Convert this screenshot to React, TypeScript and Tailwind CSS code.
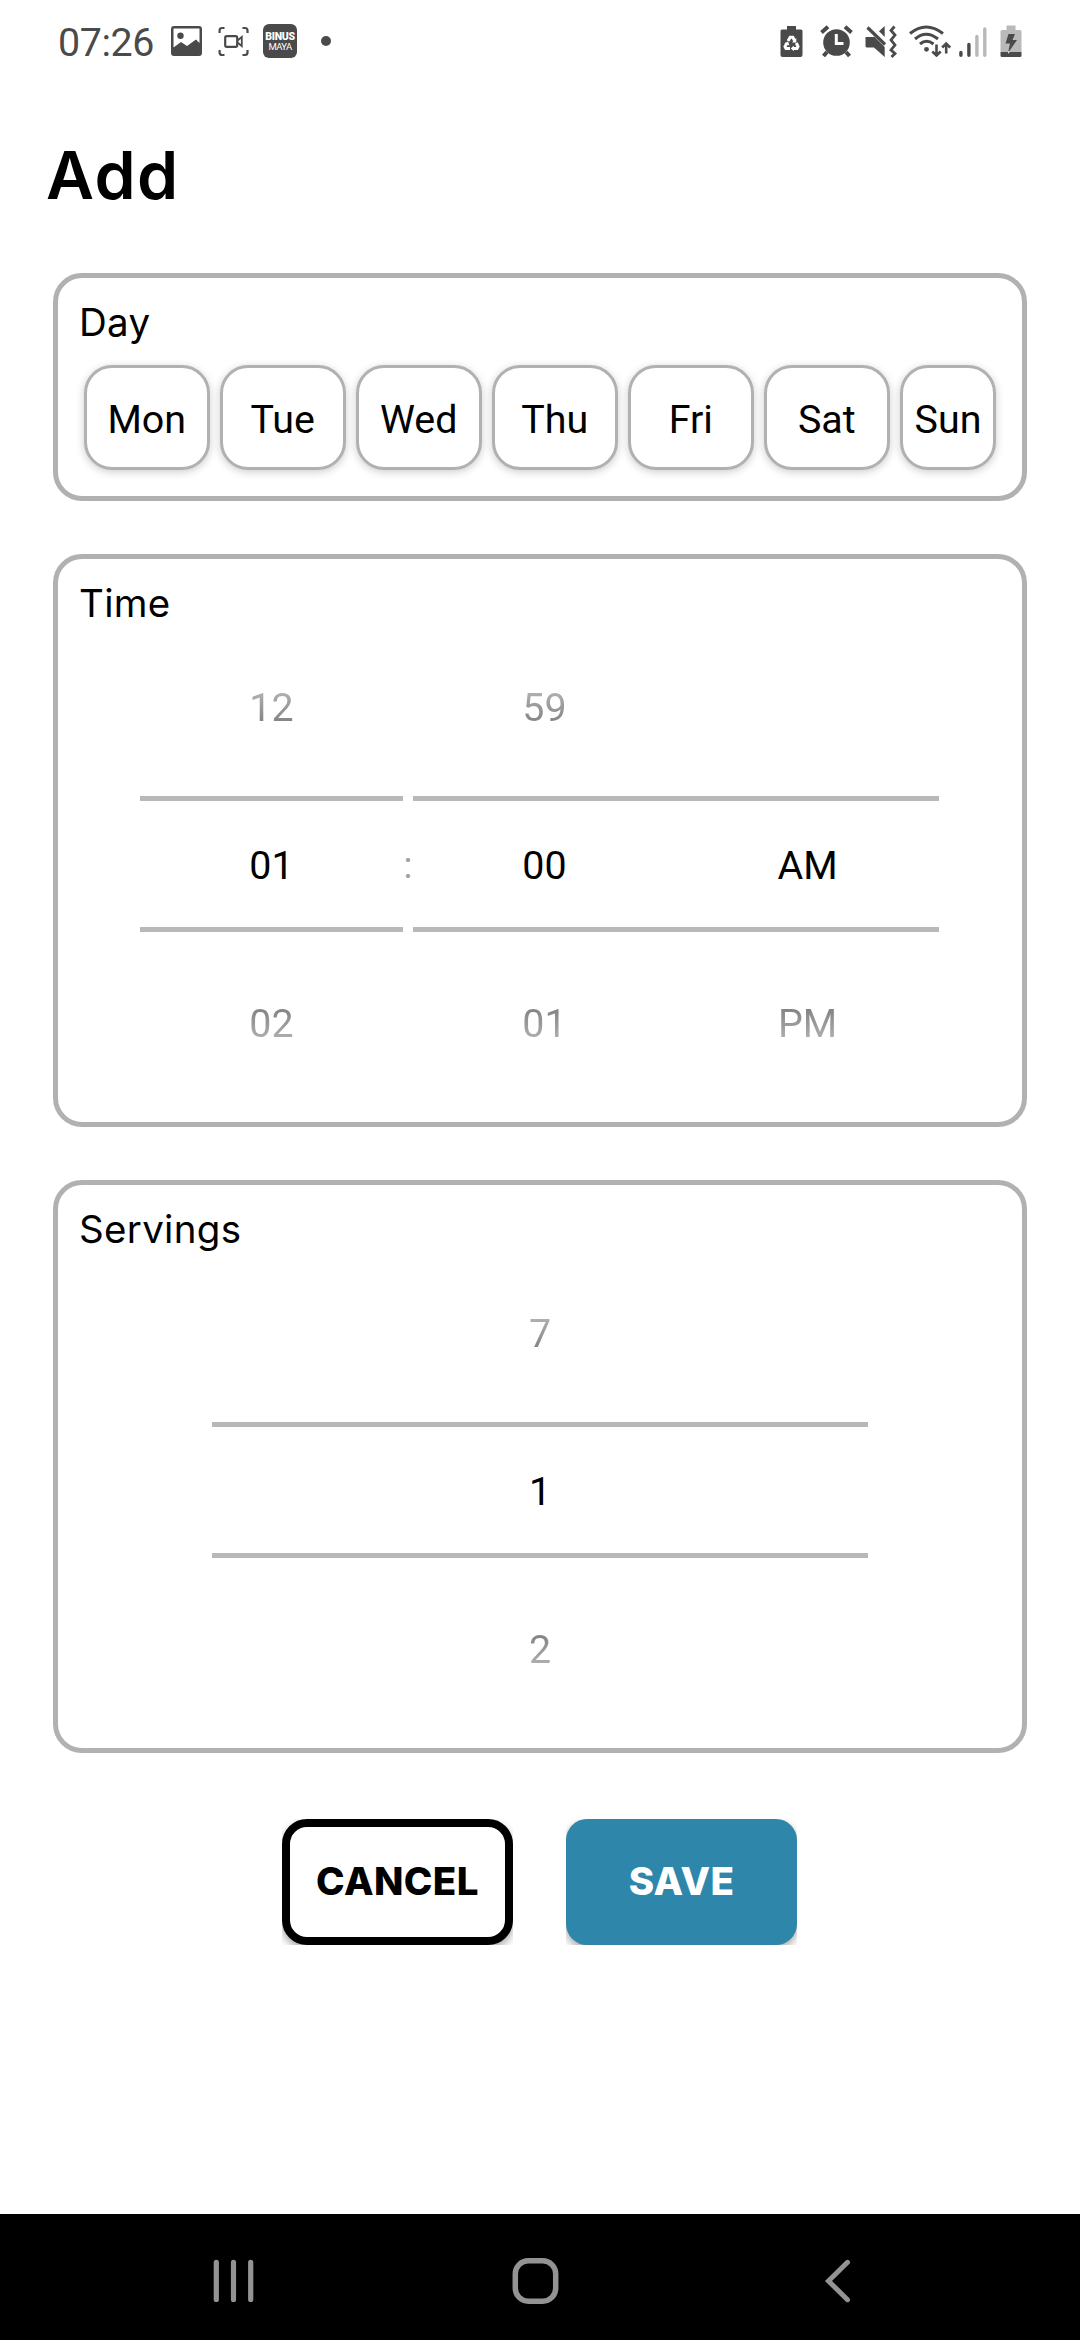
import type { ReactNode } from "react";

const days = ["Mon", "Tue", "Wed", "Thu", "Fri", "Sat"];

function StatusBar() {
  return (
    <header className="flex h-[84px] items-start text-[#4a4a4a]">
      <div className="mt-[20px] ml-[58px] w-[113px] text-[39.4px] leading-[46px] font-normal tracking-[-0.4px]">07:26</div>
      <svg className="mt-[26px] w-[31px] h-[31px]" viewBox="0 0 31 31" fill="currentColor">
        <path
          fillRule="evenodd"
          d="M3 0H28Q31 0 31 3V27Q31 30 28 30H3Q0 30 0 27V3Q0 0 3 0ZM2.500 2.500V21.500L10 16L16 20L25 13.500L28.500 17V2.500ZM9.500 6.500A3.200 3.200 0 1 1 9.500 12.900A3.200 3.200 0 1 1 9.500 6.500Z"
        />
      </svg>
      <svg className="mt-[26px] ml-[16px] w-[31px] h-[31px]" viewBox="0 0 31 31" fill="none" stroke="currentColor" strokeWidth="2.200">
        <path d="M1.600 7V4.500Q1.600 2 4.100 2H6.500M24.500 2H27Q29.500 2 29.500 4.500V7M29.500 24V26.500Q29.500 29 27 29H24.500M6.500 29H4.100Q1.600 29 1.600 26.500V24" />
        <rect x="7.200" y="10.200" width="12" height="10.600" rx="1.500" />
        <path d="M19.500 14.500L23.800 11V20L19.500 16.500" strokeWidth="1.800" />
      </svg>
      <div className="mt-[24px] ml-[14px] flex h-[34px] w-[34px] flex-col items-center rounded-[6px] bg-[#4a4a4a] pt-[8px] text-white">
        <span className="text-[10.500px] leading-[10px] font-black tracking-[-0.300px]">BINUS</span>
        <span className="text-[9.500px] leading-[9px] font-normal tracking-[-0.600px]">MAYA</span>
      </div>
      <div className="mt-[36px] ml-[24px] h-[10px] w-[10px] rounded-full bg-[#4a4a4a]" />

      <svg className="mt-[25px] ml-[449px] h-[33px] w-[23px]" viewBox="0 0 23 33" fill="currentColor">
        <path d="M7 1H16V4.500H21Q22.500 4.500 22.500 6V30Q22.500 32 20.500 32H2.500Q0.500 32 0.500 30V6Q0.500 4.500 2 4.500H7Z" />
        <g fill="none" stroke="#fff" strokeWidth="3">
          <path d="M8 16L10.200 12.300H12.800L14.500 15.500" />
          <path d="M16.300 18L18 21.500L17 23.500H13" />
          <path d="M10 23.500H6L5 21.500L7 18" />
        </g>
        <path d="M16.300 13V17.500H12ZM13.800 20.500V26.300L10.800 23.500ZM4.500 18.500L8 16.500L9.500 20.500Z" fill="#fff" />
      </svg>
      <svg className="mt-[25px] ml-[17px] h-[33px] w-[33px]" viewBox="0 0 33 33" fill="currentColor">
        <circle cx="16.500" cy="17.500" r="13.300" />
        <g stroke="currentColor" strokeWidth="4">
          <path d="M1.500 7.500L8 1.800M31.500 7.500L25 1.800" />
          <path d="M7 27L3.500 31M26 27L29.500 31" />
        </g>
        <path d="M16.300 9V18.500H23.500" fill="none" stroke="#fff" strokeWidth="3" />
      </svg>
      <svg className="mt-[25px] ml-[12px] h-[33px] w-[33px]" viewBox="0 0 33 33" fill="currentColor">
        <path d="M0.500 12H8.500L9 11.500L19.700 22V32L9 22.500H2Q0.500 22.500 0.500 21Z" />
        <path d="M14 6.200L19.700 1V12Z" />
        <path d="M2.500 2.500L20 19.500" stroke="currentColor" strokeWidth="3.200" fill="none" />
        <path d="M29.500 1.500L26 5.500L30 10L26 15L30 20L26 25L30 28.500L26.500 32" fill="none" stroke="currentColor" strokeWidth="2.800" />
      </svg>
      <svg className="mt-[25px] ml-[11px] h-[33px] w-[42px]" viewBox="0 0 42 33" fill="none" stroke="currentColor" strokeWidth="3">
        <path d="M1 8.500Q17 -4.500 34 8.500M6 14Q17 4.500 29 14M11 19Q17.500 13.500 24.500 19" />
        <circle cx="17.500" cy="24.300" r="2.400" fill="currentColor" stroke="none" />
        <path d="M27.500 19.500V30M23.300 26.500L27.500 30.500L31.700 26.500M37.200 28.500V19M33.200 22.500L37.200 18.500L41.200 22.500" strokeWidth="2.600" />
      </svg>
      <svg className="mt-[25px] ml-[8px] h-[33px] w-[28px]" viewBox="0 0 28 33" strokeWidth="3.400" strokeLinecap="round">
        <path d="M1.900 27.500V30.300M9.900 19.500V30.300" stroke="#4a4a4a" />
        <path d="M17.900 11.500V30.300M25.800 4V30.300" stroke="#b9b9b9" />
      </svg>
      <svg className="mt-[25px] ml-[13px] h-[33px] w-[22px]" viewBox="0 0 22 33">
        <path d="M6.500 0.500H15.500V5H20Q21.500 5 21.500 6.500V27H0.500V6.500Q0.500 5 2 5H6.500Z" fill="#b9b9b9" />
        <path d="M0.500 27H21.500V30.500Q21.500 32 20 32H2Q0.500 32 0.500 30.500Z" fill="#4a4a4a" />
        <path d="M8.500 9H15L12.500 15H17L8 28L10 18.500H5.500Z" fill="#4a4a4a" />
        <path d="M7.800 29L9.800 27L8.500 26Z" fill="#fff" />
      </svg>
    </header>
  );
}

function Card({ title, children, className }: { title: string; children: ReactNode; className: string }) {
  return (
    <section className={`ml-[53px] w-[974px] rounded-[29px] border-[5px] border-[#b1b1b3] pt-[21px] ${className}`}>
      <h2 className="ml-[21px] h-[47px] font-['Inter',sans-serif] text-[38.500px] leading-[46px] tracking-[0.3px]">{title}</h2>
      {children}
    </section>
  );
}

function Picker({ before, value, after, className }: { before: string; value: string; after: string; className: string }) {
  return (
    <div className={`flex flex-col text-center text-[39.4px] leading-[46px] ${className}`}>
      <div className="flex h-[169px] items-end justify-center pb-[65px]">
        <span className="bg-linear-to-b from-[#bcbcbc] to-[#777777] bg-clip-text text-transparent">{before}</span>
      </div>
      <div className="h-[5px] bg-[#b8b8ba]" />
      <div className="h-[126px] pt-[42px]">{value}</div>
      <div className="h-[5px] bg-[#b8b8ba]" />
      <div className="pt-[69px]">
        <span className="bg-linear-to-b from-[#777777] to-[#bcbcbc] bg-clip-text text-transparent">{after}</span>
      </div>
    </div>
  );
}

function DayButton({ label, width }: { label: string; width: string }) {
  return (
    <button
      className={`h-[105px] shrink-0 rounded-[28px] border-[3px] border-[#b1b1b3] bg-white pt-[4px] text-[39.4px] leading-[46px] shadow-[0_2px_8px_rgba(0,0,0,0.2)] ${width}`}
    >
      {label}
    </button>
  );
}

export default function App() {
  return (
    <div className="flex h-[2340px] w-[1080px] flex-col overflow-hidden bg-white font-['Roboto',sans-serif] text-black">
      <StatusBar />
      <h1 className="mt-[51px] ml-[46px] h-[80px] font-['Inter',sans-serif] text-[66px] leading-[80px] font-semibold tracking-[1.400px]">
        Add
      </h1>

      <Card title="Day" className="mt-[58px] h-[228px]">
        <div className="mt-[19px] ml-[26px] flex gap-[10.500px]">
          {days.map((day) => (
            <DayButton key={day} label={day} width="w-[125.500px]" />
          ))}
          <DayButton label="Sun" width="w-[96px]" />
        </div>
      </Card>

      <Card title="Time" className="mt-[53px] h-[573px]">
        <div className="ml-[82px] flex">
          <Picker before="12" value="01" after="02" className="w-[263px]" />
          <div className="w-[10px] pt-[216px] text-center text-[36.800px] leading-[46px] font-normal text-[#a0a0a0]">:</div>
          <Picker before="59" value="00" after="01" className="w-[263px]" />
          <Picker before="" value="AM" after="PM" className="w-[263px]" />
        </div>
      </Card>

      <Card title="Servings" className="mt-[53px] h-[573px]">
        <Picker before="7" value="1" after="2" className="ml-[154px] w-[656px]" />
      </Card>

      <div className="mt-[66px] ml-[282px] flex gap-[53px] font-['Inter',sans-serif] text-[38.500px] leading-[46px] font-extrabold tracking-[0.4px]">
        <div className="h-[126px] w-[231px] overflow-hidden">
          <button className="h-[126px] w-[231px] rounded-[25px] border-[8px] border-black bg-white pb-[2px] shadow-[0_4px_8px_rgba(0,0,0,0.35)]">
            CANCEL
          </button>
        </div>
        <div className="h-[126px] w-[231px] overflow-hidden">
          <button className="h-[126px] w-[231px] rounded-[21px] bg-[#2e86ab] pb-[2px] text-white shadow-[0_4px_8px_rgba(0,0,0,0.35)]">
            SAVE
          </button>
        </div>
      </div>

      <nav className="mt-auto flex h-[126px] items-center bg-black pt-[7px]">
        <svg className="ml-[213px] h-[44px] w-[42px]" viewBox="0 0 42 44" stroke="#939393" strokeWidth="5.200" strokeLinecap="round">
          <path d="M3.300 3.300V40.500M20.500 3.300V40.500M37.700 3.300V40.500" />
        </svg>
        <svg className="ml-[257px] h-[46px] w-[47px]" viewBox="0 0 47 46" fill="none" stroke="#939393" strokeWidth="5.500">
          <rect x="3.300" y="2.800" width="40.400" height="40.400" rx="13" />
        </svg>
        <svg className="ml-[265px] h-[44px] w-[27px]" viewBox="0 0 27 44" fill="none" stroke="#939393" strokeWidth="5" strokeLinecap="round">
          <path d="M23.500 3.300L4.500 22L23.500 40.700" />
        </svg>
      </nav>
    </div>
  );
}
